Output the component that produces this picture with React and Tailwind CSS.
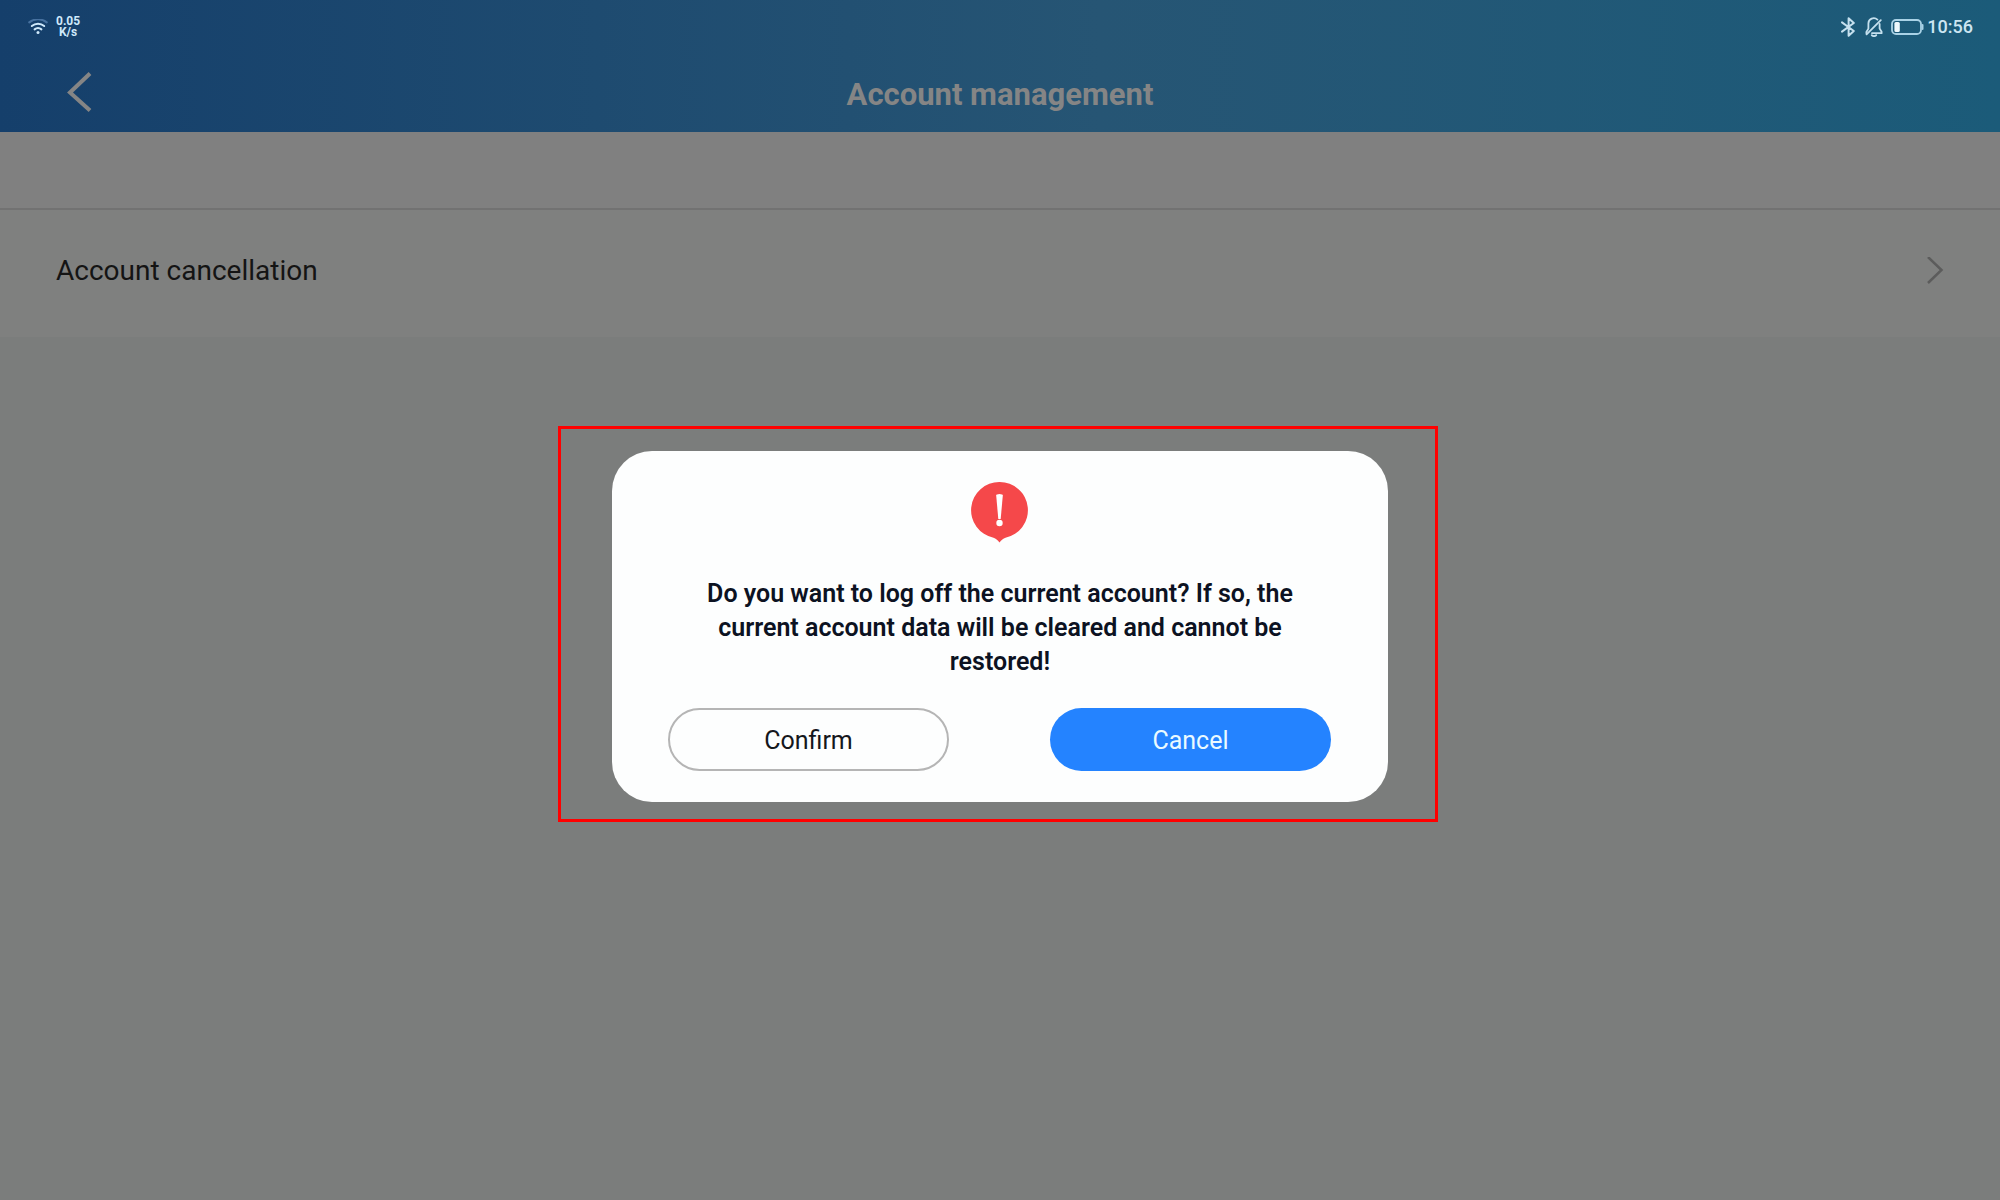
function WifiIcon() {
  return (
    <svg width="20" height="16" viewBox="0 0 20 16" fill="none" strokeWidth="2" strokeLinecap="round">
      <path d="M1.2 3.4a14 14 0 0 1 17.6 0" stroke="#47719f" />
      <path d="M3.8 7a9.6 9.6 0 0 1 12.4 0M6.6 10.4a5.4 5.4 0 0 1 6.8 0" stroke="#cfe9fb" />
      <circle cx="10" cy="13.6" r="1.5" fill="#cfe9fb" />
    </svg>
  );
}

function BluetoothIcon() {
  return (
    <svg width="14" height="20" viewBox="0 0 14 20" fill="none" stroke="#c5e0ee" strokeWidth="2" strokeLinejoin="round" strokeLinecap="round">
      <path d="M1 5.4 12.8 14 7.6 18.8V1.2L12.8 6 1 14.6" />
    </svg>
  );
}

function BellOffIcon() {
  return (
    <svg width="18" height="20" viewBox="0 0 18 20" fill="none" stroke="#c5e0ee" strokeWidth="1.8" strokeLinejoin="round" strokeLinecap="round">
      <path d="M12.4 2.6A5.4 5.4 0 0 0 3.4 6.6v5L1.4 15v1.2M14.6 7v4.6l2 3.2v1.4H7" />
      <path d="M15.8 3.2 1.6 17.4M6.8 18.2c1.2 1 3.2 1 4.4 0" />
    </svg>
  );
}

function BatteryIcon() {
  return (
    <svg width="33" height="16" viewBox="0 0 33 16" fill="none">
      <rect x="1" y="1" width="29" height="14" rx="4" stroke="#a9d2e6" strokeWidth="1.8" />
      <rect x="3.4" y="3" width="5.4" height="10" rx="1.5" fill="#eef8fc" />
      <path d="M31.6 6v4" stroke="#a9d2e6" strokeWidth="1.8" strokeLinecap="round" />
    </svg>
  );
}

function AlertIcon() {
  return (
    <svg className="mx-auto block" width="58" height="62" viewBox="0 0 58 62">
      <path d="M28.5 1a28.2 28.2 0 0 1 6 55.8c-2.4.6-4 2.4-6 4.7-2-2.3-3.6-4.1-6-4.7A28.2 28.2 0 0 1 28.5 1Z" fill="#f5484a" />
      <path d="M25.2 14.5q0-1.5 3.3-1.5t3.3 1.5L29.7 38h-2.4Z" fill="#fff" />
      <circle cx="28.5" cy="42" r="3.2" fill="#fff" />
    </svg>
  );
}

function StatusBar() {
  return (
    <div className="flex h-14 items-center justify-between pr-[27px] pb-0.5 pl-7">
      <div className="flex items-center gap-2">
        <WifiIcon />
        <p className="text-center text-xs leading-[11px] font-bold text-[#cfe9fb]">
          0.05
          <br />
          K/s
        </p>
      </div>
      <div className="flex items-center text-[#cde6f2]">
        <BluetoothIcon />
        <span className="ml-2.5"><BellOffIcon /></span>
        <span className="ml-2"><BatteryIcon /></span>
        <span className="ml-[3px] text-lg leading-none font-medium">10:56</span>
      </div>
    </div>
  );
}

function Header() {
  return (
    <header className="flex h-[132px] flex-col bg-linear-to-r from-[#153f6b] via-[#265574] via-55% to-[#1b5b79]">
      <StatusBar />
      <div className="grid flex-1 grid-cols-[1fr_auto_1fr] items-center px-16">
        <button aria-label="Back" className="w-8 pb-1">
          <svg width="28" height="40" viewBox="0 0 28 40" fill="none" stroke="#858585" strokeWidth="4">
            <path d="M26 1.5 6 20.5l20 18" />
          </svg>
        </button>
        <h1 className="pt-0.5 text-[31px] leading-10 font-bold text-[#858585]">Account management</h1>
      </div>
    </header>
  );
}

function ConfirmDialog() {
  return (
    <div className="fixed inset-0 flex items-center justify-center pt-12 pr-1">
      <div className="border-[3px] border-[#ff0000] pt-[22px] pr-[47px] pb-[17px] pl-[51px]">
        <div role="dialog" aria-modal="true" aria-labelledby="dialog-message" className="w-[776px] rounded-[40px] bg-[#fdfefe] px-14 pt-[30px] pb-[31px]">
          <AlertIcon />
          <p id="dialog-message" className="mt-[34px] px-8 text-center text-[25px] leading-[34px] font-semibold text-[#0c1222]">
            Do you want to log off the current account? If so, the current account data will be cleared and cannot be restored!
          </p>
          <div className="mt-[29px] flex justify-between pr-px">
            <button className="h-[63px] w-[281px] rounded-full border-2 border-[#b5b5b5] pt-0.5 text-[25px] text-[#15171c]">Confirm</button>
            <button className="h-[63px] w-[281px] rounded-full bg-[#2483ff] pt-0.5 text-[25px] text-[#eafaff]">Cancel</button>
          </div>
        </div>
      </div>
    </div>
  );
}

export default function App() {
  return (
    <div className="min-h-screen bg-[#7b7d7c] font-['Roboto',sans-serif]">
      <Header />
      <main>
        <div className="h-[78px] border-b-2 border-[#727272] bg-[#808080]" />
        <button className="flex h-[127px] w-full items-center justify-between bg-[#7f807f] px-14 pb-1.5 text-left text-[28px] text-[#141414]">
          Account cancellation
          <svg width="18" height="28" viewBox="0 0 18 28" fill="none" stroke="#5c5c5c" strokeWidth="2.5">
            <path d="m2 0 13.5 13L2 26" />
          </svg>
        </button>
      </main>
      <ConfirmDialog />
    </div>
  );
}
